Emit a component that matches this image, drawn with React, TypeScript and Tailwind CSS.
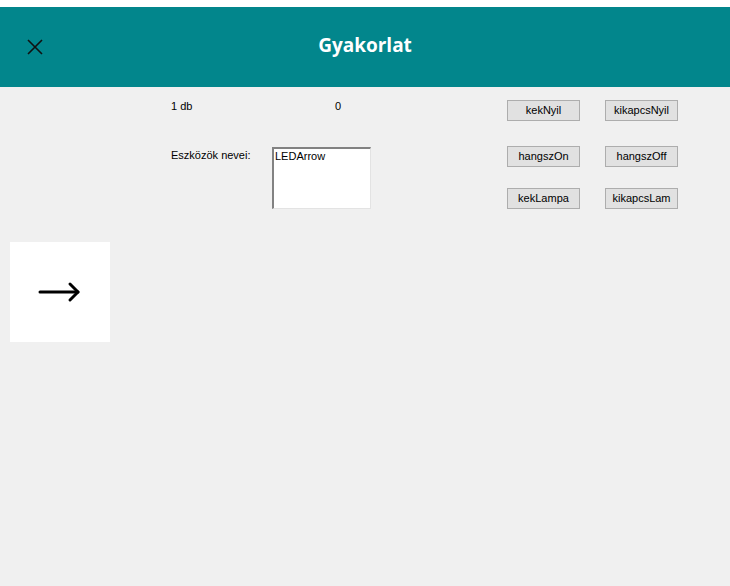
import React from 'react'

const winFont = { fontFamily: '"Liberation Sans", Arial, sans-serif' }

function WinButton({ label }: { label: string }) {
  return (
    <button
      type="button"
      className="h-[21px] w-[73px] border border-[#adadad] bg-[#e1e1e1] text-[11px] leading-[19px] text-black"
    >
      {label}
    </button>
  )
}

export default function App() {
  const buttons = [
    ['kekNyil', 'kikapcsNyil'],
    ['hangszOn', 'hangszOff'],
    ['kekLampa', 'kikapcsLam'],
  ]

  return (
    <div className="flex h-[586px] w-[730px] flex-col bg-[#f0f0f0]" style={winFont}>
      <div className="h-[7px] bg-white" />
      <header className="grid h-[80px] grid-cols-[1fr_auto_1fr] items-center bg-[#02868c]">
        <div className="pl-[27px]">
          <svg width="16" height="16" viewBox="0 0 16 16" fill="none">
            <path d="M1 1L15 15M15 1L1 15" stroke="#111" strokeWidth="1.6" />
          </svg>
        </div>
        <h1
          className="pb-[3px] text-[19px] font-bold text-white"
          style={{ fontFamily: '"Open Sans", "Noto Sans", sans-serif' }}
        >
          Gyakorlat
        </h1>
        <div />
      </header>

      <main className="flex flex-1 text-[11px] text-black">
        {/* left: arrow display */}
        <div className="w-[110px] pl-[10px] pt-[155px]">
          <div className="flex h-[100px] w-[100px] items-center justify-center bg-white">
            <svg width="44" height="22" viewBox="0 0 44 22" fill="none">
              <path d="M2 11H40" stroke="#000" strokeWidth="3" strokeLinecap="round" />
              <path
                d="M32 3L40 11L32 19"
                stroke="#000"
                strokeWidth="3"
                strokeLinecap="round"
                strokeLinejoin="round"
              />
            </svg>
          </div>
        </div>

        {/* middle: counters and list */}
        <div className="ml-[61px] w-[336px] pt-[13px]">
          <div className="flex h-[13px] leading-[13px]">
            <span className="w-[164px]">1 db</span>
            <span>0</span>
          </div>
          <div className="mt-[34px] flex">
            <span className="w-[101px] pt-[2px] leading-[13px]">Eszközök nevei:</span>
            <div className="h-[62px] w-[99px] border border-l-2 border-t-2 border-b-[#e3e3e3] border-l-[#828282] border-r-[#e3e3e3] border-t-[#828282] bg-white pl-[1px] pt-[1px] leading-[13px]">
              LEDArrow
            </div>
          </div>
        </div>

        {/* right: buttons */}
        <div className="flex flex-col gap-[25px] pt-[13px]">
          {buttons.map((row, i) => (
            <div key={i} className={i === 2 ? '-mt-[4px] flex gap-[25px]' : 'flex gap-[25px]'}>
              {row.map((b) => (
                <WinButton key={b} label={b} />
              ))}
            </div>
          ))}
        </div>
      </main>
    </div>
  )
}
